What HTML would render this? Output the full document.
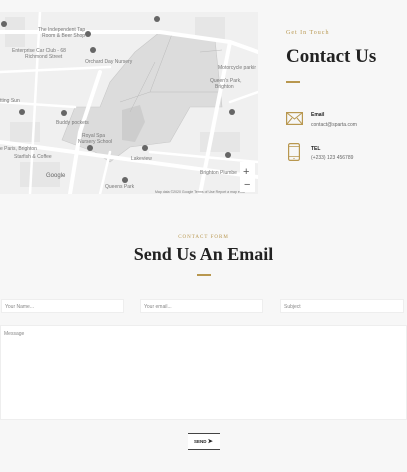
<!DOCTYPE html>
<html><head><meta charset="utf-8"><style>
*{margin:0;padding:0;box-sizing:border-box}
body{width:407px;height:472px;background:#f7f7f7;font-family:"Liberation Sans",sans-serif;position:relative;overflow:hidden}
.abs{position:absolute}
.serif{font-family:"Liberation Serif",serif;font-weight:bold}
.gold{color:#b8974f}
.inp{position:absolute;background:#fff;border:1px solid #eee;font-size:5px;color:#888;padding:4px 3px}
</style></head><body>
<svg class="abs" style="left:0;top:12px" width="258" height="182" viewBox="0 0 258 182">
<rect width="258" height="182" fill="#f0f0f0"/>
<g fill="#e6e6e6">
<rect x="5" y="5" width="20" height="30"/><rect x="195" y="5" width="30" height="25"/><rect x="10" y="110" width="30" height="20"/><rect x="200" y="120" width="40" height="20"/><rect x="20" y="150" width="40" height="25"/>
</g>
<path d="M160 20 L215 28 L222 95 L190 95 L170 130 L130 135 L110 150 L95 140 L62 128 L75 95 L100 95 L110 70 L135 40 Z" fill="#dcdcdc" stroke="#c8c8c8" stroke-width="0.6"/>
<path d="M122 98 L140 93 L145 110 L135 130 L122 128 Z" fill="#cdcdcd"/>
<g stroke="#bbb" fill="none" stroke-width="0.5"><path d="M172 22 L150 80 L120 90 M150 80 L222 80 M200 40 L222 38 M155 50 L130 100"/></g>
<g stroke="#fff" fill="none" stroke-linecap="round">
<path d="M0 20 L160 20 L230 30 L258 40" stroke-width="4"/>
<path d="M100 60 L80 120 L70 182" stroke-width="4"/>
<path d="M0 130 L258 165" stroke-width="4"/>
<path d="M230 30 L200 182" stroke-width="4"/>
<path d="M0 60 L110 55" stroke-width="2.5"/>
<path d="M0 90 L75 95" stroke-width="2.5"/>
<path d="M150 140 L258 150" stroke-width="2.5"/>
<path d="M40 0 L30 182" stroke-width="2.5"/>
<path d="M110 140 L100 182" stroke-width="2.5"/>
<path d="M230 90 L258 80" stroke-width="2.5"/>
</g>
<g fill="#777" font-size="5" font-family="Liberation Sans">
<text x="38" y="19">The Independent Tap</text><text x="42" y="25">Room &amp; Beer Shop</text>
<text x="12" y="40">Enterprise Car Club - 68</text><text x="25" y="46">Richmond Street</text>
<text x="85" y="51">Orchard Day Nursery</text>
<text x="218" y="57">Motorcycle parkir</text>
<text x="210" y="70">Queen's Park,</text><text x="215" y="76">Brighton</text>
<text x="56" y="112">Buddy pockets</text>
<text x="82" y="125">Royal Spa</text><text x="78" y="131">Nursery School</text>
<text x="0" y="138">e Paris, Brighton</text>
<text x="14" y="146">Starfish &amp; Coffee</text>
<text x="131" y="148">Lakeview</text>
<text x="0" y="90">tting Sun</text>
<text x="105" y="176">Queens Park</text>
<text x="200" y="162">Brighton Plumbe</text>
<text x="46" y="165" font-size="6" fill="#666">Google</text>
<text x="155" y="181" font-size="3.5">Map data ©2020 Google  Terms of Use  Report a map error</text>
</g>
<g fill="#666"><circle cx="157" cy="7" r="3"/><circle cx="88" cy="22" r="3"/><circle cx="93" cy="38" r="3"/><circle cx="22" cy="100" r="3"/><circle cx="64" cy="101" r="3"/><circle cx="90" cy="136" r="3"/><circle cx="145" cy="136" r="3"/><circle cx="232" cy="100" r="3"/><circle cx="228" cy="143" r="3"/><circle cx="125" cy="168" r="3"/><circle cx="4" cy="12" r="3"/></g>
<rect x="240" y="150" width="15" height="30" fill="#fff"/>
<text x="243" y="163" font-size="11" fill="#555">+</text><text x="244" y="176" font-size="11" fill="#555">−</text>
</svg>

<div class="abs serif gold" style="left:286px;top:30px;font-size:6px;letter-spacing:1px;font-weight:normal">Get In Touch</div>
<div class="abs serif" style="left:286px;top:46px;font-size:19px;color:#222">Contact Us</div>
<div class="abs" style="left:286px;top:81px;width:14px;height:1.5px;background:#b8974f"></div>

<svg class="abs" style="left:286px;top:112px" width="17" height="13" viewBox="0 0 17 13"><rect x="0.6" y="0.6" width="15.8" height="11.8" fill="none" stroke="#b8974f" stroke-width="1.2"/><path d="M0.6 0.6 L8.5 7 L16.4 0.6 M0.6 12.4 L6 6 M16.4 12.4 L11 6" fill="none" stroke="#b8974f" stroke-width="1"/></svg>
<div class="abs" style="left:311px;top:112px;font-size:5px;font-weight:bold;color:#222">Email</div>
<div class="abs" style="left:311px;top:122px;font-size:5px;color:#666">contact@sparta.com</div>

<svg class="abs" style="left:288px;top:143px" width="12" height="18" viewBox="0 0 12 18"><rect x="0.6" y="0.6" width="10.8" height="16.8" rx="1.5" fill="none" stroke="#b8974f" stroke-width="1.2"/><path d="M0.6 3.5H11.4M0.6 13.5H11.4" stroke="#b8974f" stroke-width="0.8"/><circle cx="6" cy="15.5" r="0.6" fill="#b8974f"/></svg>
<div class="abs" style="left:311px;top:146px;font-size:5px;font-weight:bold;color:#222">TEL</div>
<div class="abs" style="left:311px;top:155px;font-size:5px;color:#666">(+233) 123 456789</div>

<div class="abs serif gold" style="left:0;width:407px;text-align:center;top:235px;font-size:5px;letter-spacing:1px;font-weight:normal">CONTACT FORM</div>
<div class="abs serif" style="left:0;width:407px;text-align:center;top:244px;font-size:18px;color:#222">Send Us An Email</div>
<div class="abs" style="left:197px;top:274px;width:14px;height:1.5px;background:#b8974f"></div>

<div class="inp" style="left:1px;top:299px;width:123px;height:14px">Your Name...</div>
<div class="inp" style="left:140px;top:299px;width:123px;height:14px">Your email...</div>
<div class="inp" style="left:280px;top:299px;width:124px;height:14px">Subject</div>
<div class="inp" style="left:0;top:325px;width:407px;height:95px;padding-top:5px">Message</div>

<div class="abs" style="left:188px;top:433px;width:32px;height:17px;background:#fff;border-top:1px solid #444;border-bottom:1px solid #444;font-size:4.5px;font-weight:bold;color:#222;line-height:15px;padding-left:6px">SEND <span style="font-size:6px">➤</span></div>
</body></html>
